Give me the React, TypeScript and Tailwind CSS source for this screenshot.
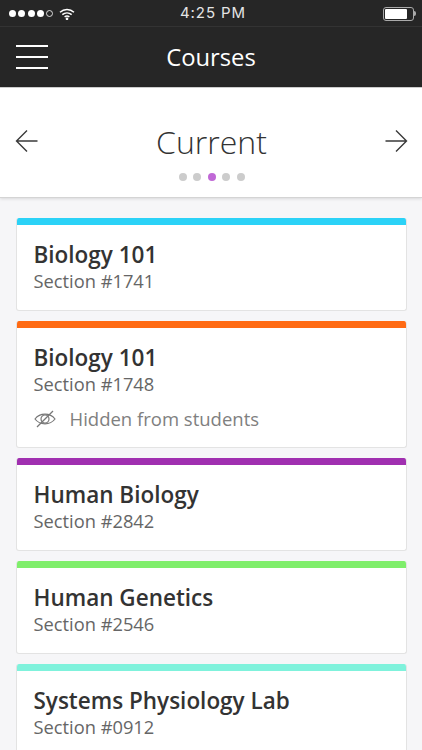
const COURSES = [
  { title: "Biology 101", section: "Section #1741", bar: "bg-[#2bd2f7]" },
  { title: "Biology 101", section: "Section #1748", bar: "bg-[#ff6a13]", hidden: true },
  { title: "Human Biology", section: "Section #2842", bar: "bg-[#a02fb0]" },
  { title: "Human Genetics", section: "Section #2546", bar: "bg-[#7fee6b]" },
  { title: "Systems Physiology Lab", section: "Section #0912", bar: "bg-[#7ff2dc]" },
];

function Arrow({ flip = false }: { flip?: boolean }) {
  return (
    <svg className={flip ? "w-[24px] h-[24px] mt-[41px] rotate-180" : "w-[24px] h-[24px] mt-[41px]"} viewBox="0 0 24 24" fill="none" stroke="#3a3a3a" strokeWidth="1.4">
      <path d="M22.5 12H2M12 1.5 1.5 12 12 22.5" />
    </svg>
  );
}

function StatusBar() {
  return (
    <div className="h-[27px] flex items-center relative border-b border-[#333333] pt-[1px]">
      <div className="flex items-center gap-[2.3px] pl-[9px]">
        {[0, 1, 2, 3].map((i) => (
          <span key={i} className="w-[7px] h-[7px] rounded-full bg-white" />
        ))}
        <span className="w-[7px] h-[7px] rounded-full border border-white/80" />
      </div>
      <svg className="w-[16px] h-[12px] ml-[6px]" viewBox="0 0 16 12" fill="none" stroke="white" strokeWidth="1.5">
        <path d="M1 4.2C5 .6 11 .6 15 4.2M3.3 6.6c2.7-2.3 6.7-2.3 9.4 0M5.6 8.9c1.4-1 3.4-1 4.8 0" />
        <circle cx="8" cy="10.8" r="0.6" fill="white" />
      </svg>
      <div className="flex-1" />
      <div className="flex items-center pr-[6px]">
        <div className="w-[31px] h-[14px] rounded-[3px] border border-[#aaaaaa] p-[1px]">
          <div className="w-[22px] h-full rounded-[1px] bg-white" />
        </div>
        <span className="w-[2px] h-[5px] bg-[#aaaaaa] rounded-r-sm" />
      </div>
      <span className="absolute inset-x-0 pl-[4px] text-center text-[15px] tracking-[0.9px] text-[#e4e4e4] font-['Inter',sans-serif]">4:25 PM</span>
    </div>
  );
}

export default function App() {
  return (
    <div className="w-[422px] h-[750px] overflow-hidden bg-[#f6f6f8] font-['Open_Sans',sans-serif] text-[#333333]">
      <header className="bg-[#262626]">
        <StatusBar />
        <div className="h-[60px] flex items-center relative px-[16px]">
          <div className="flex flex-col gap-[9px] w-[32px]">
            <span className="h-[2px] bg-white" />
            <span className="h-[2px] bg-white" />
            <span className="h-[2px] bg-white" />
          </div>
          <span className="absolute inset-x-0 text-center text-[23.8px] text-white pt-[1px]">Courses</span>
        </div>
      </header>

      <div className="h-[111px] bg-white border-t border-[#cccccc] border-b border-b-[#d4d4d4] shadow-[0_1px_3px_rgba(0,0,0,0.12)] flex items-start justify-between pl-[15px] pr-[14px]">
        <Arrow />
        <div className="flex flex-col items-center pt-[32px]">
          <span className="text-[32px] leading-[44px] font-light text-[#333333]">Current</span>
          <div className="flex gap-[6.5px] mt-[9px] ml-[1px]">
            <span className="w-[8px] h-[8px] rounded-full bg-[#cccccc]" />
            <span className="w-[8px] h-[8px] rounded-full bg-[#cccccc]" />
            <span className="w-[8px] h-[8px] rounded-full bg-[#c068d6]" />
            <span className="w-[8px] h-[8px] rounded-full bg-[#cccccc]" />
            <span className="w-[8px] h-[8px] rounded-full bg-[#cccccc]" />
          </div>
        </div>
        <Arrow flip />
      </div>

      <main className="pl-[16px] pr-[15px] pt-[20px] flex flex-col gap-[10px]">
        {COURSES.map((c) => (
          <div key={c.section} className="bg-white rounded-[3px] overflow-hidden border-x border-b border-[#e3e3e3] shrink-0">
            <div className={`h-[7px] -mx-px ${c.bar}`} />
            <div className="pl-[16.5px] pr-[16px] pt-[15px] pb-[18px]">
              <div className="text-[22.5px] leading-[30px] font-semibold text-[#333333]">{c.title}</div>
              <div className="text-[18.3px] leading-[22px] text-[#666666]">{c.section}</div>
              {c.hidden && (
                <div className="flex items-center gap-[14px] mt-[12px] mb-[-2px] text-[18.5px] leading-[24px] text-[#808080]">
                  <svg className="w-[22px] h-[20px]" viewBox="0 0 22 20" fill="none" stroke="#777777" strokeWidth="1.2">
                    <path d="M1 10c5-6.5 15-6.5 20 0-5 6.5-15 6.5-20 0Z" />
                    <circle cx="11" cy="10" r="4" />
                    <path d="M3 18 19 2" />
                  </svg>
                  Hidden from students
                </div>
              )}
            </div>
          </div>
        ))}
      </main>
    </div>
  );
}
